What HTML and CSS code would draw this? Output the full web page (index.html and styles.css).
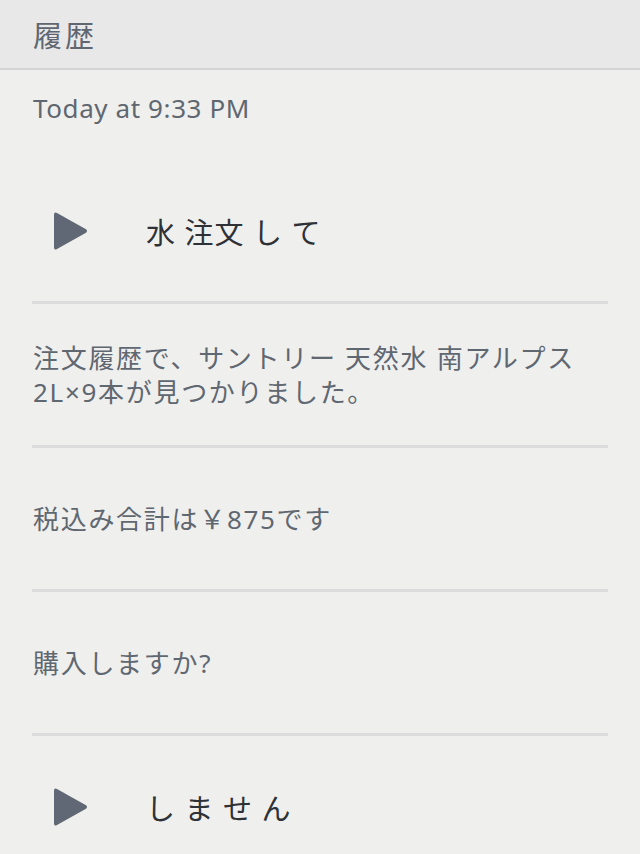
FILE: index.html
```html
<!DOCTYPE html>
<html lang="ja">
<head>
  <meta charset="UTF-8" />
  <meta name="viewport" content="width=device-width, initial-scale=1.0"/>
  <title>履歴</title>
  <link rel="stylesheet" href="styles.css">
</head>
<body>
  <header class="topbar">
    <h1>履歴</h1>
  </header>

  <main class="history">
    <p class="stamp">Today at 9:33 PM</p>

    <div class="row utterance">
      <svg class="play" viewBox="0 0 34 40" width="34" height="40">
        <path d="M3 2 L32 18.3 Q34 20 32 21.7 L3 38 Q0 39.5 0 36.5 L0 3.5 Q0 0.5 3 2 Z" />
      </svg>
      <span>水 注文 し て</span>
    </div>

    <div class="row reply">
      <p>注文履歴で、サントリー 天然水 南アルプス 2L×9本が見つかりました。</p>
    </div>

    <div class="row reply">
      <p>税込み合計は￥875です</p>
    </div>

    <div class="row reply">
      <p>購入しますか?</p>
    </div>

    <div class="row utterance">
      <svg class="play" viewBox="0 0 34 40" width="34" height="40">
        <path d="M3 2 L32 18.3 Q34 20 32 21.7 L3 38 Q0 39.5 0 36.5 L0 3.5 Q0 0.5 3 2 Z" />
      </svg>
      <span>し ま せ ん</span>
    </div>
  </main>
</body>
</html>
```

FILE: styles.css
```css
body {
  margin: 0;
  padding: 0;
  background-color: #efefed;
  font-family: "Noto Sans", "Noto Sans CJK JP", sans-serif;
  color: #5f6771;
  overflow: hidden;
}
.topbar {
  height: 68px;
  background-color: #e8e8e8;
  border-bottom: 2px solid #d4d4d4;
  display: flex;
  align-items: center;
  padding: 0 33px;
}
.topbar h1 {
  margin: 0;
  font-size: 29px;
  font-weight: normal;
  color: #5f6670;
  letter-spacing: 3px;
}
.history {
  padding: 0 32px;
}
.stamp {
  margin: 0;
  padding: 24px 1px 0;
  height: 66px;
  font-size: 26px;
  line-height: 28px;
  letter-spacing: 0.6px;
}
.row {
  height: 141px;
  display: flex;
  align-items: center;
  border-bottom: 3px solid #dcdcdc;
}
.row:last-child {
  border-bottom: none;
}
.reply p {
  margin: 0;
  padding-left: 1px;
  font-size: 26px;
  line-height: 34px;
  letter-spacing: 1.7px;
}
.utterance .play {
  fill: #5f6874;
  margin-left: 22px;
  flex-shrink: 0;
}
.utterance span {
  margin-left: 58px;
  font-size: 29px;
  color: #2e3237;
  letter-spacing: 1px;
}
```
